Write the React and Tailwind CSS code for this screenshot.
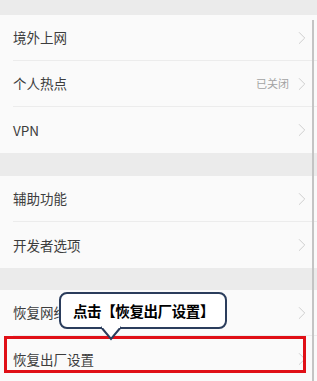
import { ChevronRight } from 'lucide-react';

const font = { fontFamily: '"Noto Sans CJK SC", "Noto Sans", sans-serif' };

function Row({ label, value, divider }) {
  return (
    <div className="h-[46px] pl-[13px] flex items-stretch">
      <div className={`flex-1 flex items-center pr-[4px] ${divider ? 'border-b border-[#ececec]' : ''}`}>
        <span className="flex-1 text-[13.5px] text-[#3d3d3d]">{label}</span>
        {value && <span className="text-[11px] text-[#a3a3a3] mr-[2px]">{value}</span>}
        <ChevronRight size={22} strokeWidth={1} className="text-[#cbcbcb]" />
      </div>
    </div>
  );
}

export default function App() {
  return (
    <div className="relative w-[317px] h-[381px] overflow-hidden bg-[#ebebeb]" style={font}>
      <div className="h-[15px]" />
      <div className="bg-[#fafafa]">
        <Row label="境外上网" divider />
        <Row label="个人热点" value="已关闭" divider />
        <Row label="VPN" />
      </div>
      <div className="h-[23px]" />
      <div className="bg-[#fafafa]">
        <Row label="辅助功能" divider />
        <Row label="开发者选项" />
      </div>
      <div className="h-[22px]" />
      <div className="bg-[#fafafa]">
        <Row label="恢复网络设置" divider />
        <Row label="恢复出厂设置" />
      </div>

      {/* scrollbar */}
      <div className="absolute left-[312px] top-[20px] w-[2px] h-[361px] bg-[#c4c4c4]" />

      {/* red highlight */}
      <div className="absolute left-[4px] top-[336px] w-[302px] h-[37px] border-[3px] border-[#e00f16]" />

      {/* callout */}
      <div className="absolute left-[59px] top-[292px] w-[168px] h-[37px] bg-white border-2 border-[#2b3d5c] rounded-[8px] flex items-center pl-[12px]">
        <span className="text-[14.5px] font-bold text-black tracking-[-0.4px]">点击【恢复出厂设置】</span>
      </div>
      <svg className="absolute left-[99px] top-[326px]" width="24" height="16" viewBox="0 0 24 16">
        <path d="M2 1 L12 13 L22 1" fill="white" stroke="#2b3d5c" strokeWidth="2" strokeLinejoin="miter" />
        <rect x="3" y="0" width="18" height="2" fill="white" />
      </svg>
    </div>
  );
}
